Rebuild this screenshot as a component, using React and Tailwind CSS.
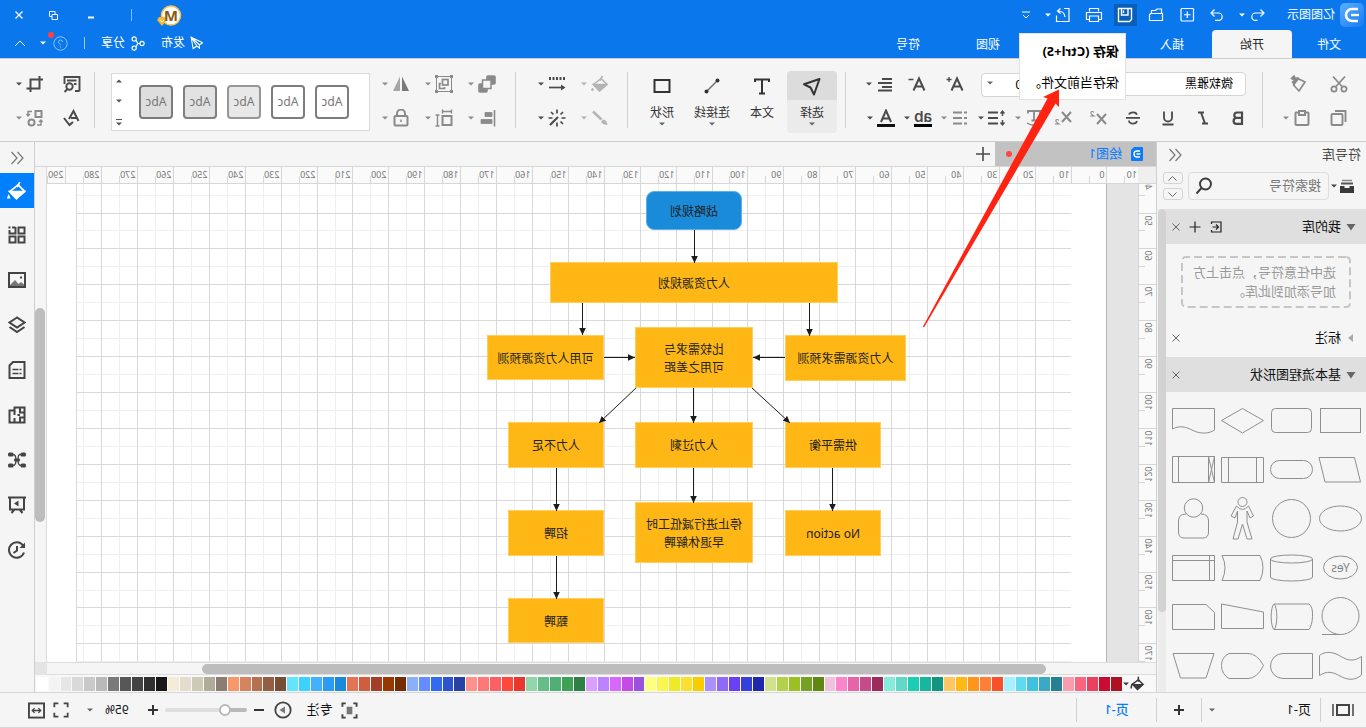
import React from "react";

const LINE = "#4a4a4a";

/* ---------- small helpers ---------- */

function Svg({ size = 18, box = 18, children, className = "", ...rest }) {
  return (
    <svg
      width={size}
      height={size}
      viewBox={`0 0 ${box} ${box}`}
      fill="none"
      stroke="currentColor"
      strokeWidth="1.6"
      className={`shrink-0 ${className}`}
      aria-hidden="true"
      {...rest}
    >
      {children}
    </svg>
  );
}

function Caret({ className = "" }) {
  return (
    <svg width="8" height="4" viewBox="0 0 8 4" className={`shrink-0 ${className}`} aria-hidden="true">
      <path d="M1 0.5H7L4 3.5Z" fill="currentColor" />
    </svg>
  );
}

function Tool({ label, caret, dim, children }) {
  return (
    <button
      type="button"
      aria-label={label}
      className={`flex shrink-0 items-center gap-[3px] ${dim ? "text-[#8a8a8a]" : "text-[#4a4a4a]"}`}
    >
      {children}
      {caret && <Caret />}
    </button>
  );
}

function Divider() {
  return <div className="mt-[13px] h-14 w-px shrink-0 bg-[#d0d0d0]" />;
}

function Rows({ top, bottom, className = "" }) {
  return (
    <div className={`flex shrink-0 flex-col gap-[10px] pt-[13px] ${className}`}>
      <div className="flex h-6 items-center">{top}</div>
      <div className="flex h-6 items-center">{bottom}</div>
    </div>
  );
}

/* ---------- title bar ---------- */

function TitleBar() {
  return (
    <header className="flex h-[30px] shrink-0 items-center justify-between pr-[15px] pl-[2px] text-white">
      <div className="flex items-center">
        <svg width="24" height="24" viewBox="0 0 24 24" aria-hidden="true">
          <defs>
            <linearGradient id="logo" x1="0" y1="1" x2="1" y2="0">
              <stop offset="0" stopColor="#1479f5" />
              <stop offset="1" stopColor="#5cb0ff" />
            </linearGradient>
          </defs>
          <rect width="24" height="24" rx="5" fill="url(#logo)" />
          <path d="M6 6H12a6 6 0 0 1 0 12H6" fill="none" stroke="#fff" strokeWidth="2.6" />
          <path d="M5 12H13" stroke="#fff" strokeWidth="2.4" />
        </svg>
        <h1 className="ml-[5px] text-xs">亿图图示</h1>
        <div className="ml-[20px] flex items-center">
          <button type="button" aria-label="撤销" className="flex items-center gap-[3px]">
            <Svg strokeWidth="1.2"><path d="M6.500 3.500L3 7L6.500 10.500M3.500 7H11.500a3.700 3.700 0 0 1 0 7.400H9.500" /></Svg>
            <Caret />
          </button>
          <button type="button" aria-label="恢复" className="ml-[12px]">
            <Svg strokeWidth="1.2"><path d="M11.500 3.500L15 7L11.500 10.500M14.500 7H7.500a3.700 3.700 0 0 0 0 7.400H11" /></Svg>
          </button>
          <button type="button" aria-label="新建" className="ml-[12px]">
            <Svg strokeWidth="1.2"><rect x="2.500" y="2.500" width="12.500" height="12.500" rx="1" /><path d="M8.750 5.500V12M5.500 8.750H12" /></Svg>
          </button>
          <button type="button" aria-label="打开" className="ml-[13px]">
            <Svg strokeWidth="1.2"><path d="M2.500 14.500V7.500H14.500L15.500 8.500V14.500H2.500ZM3.500 7V3H8L9.500 4.500H13.500V7" /></Svg>
          </button>
          <button type="button" aria-label="保存" className="ml-[10px] flex h-[22px] w-[23px] items-center justify-center bg-[#075fba]">
            <Svg strokeWidth="1.4"><path d="M2.500 2.500H15.500V15.500H4.500L2.500 13.500ZM6 2.500V9H12.500V2.500M10.500 4.500V7" /></Svg>
          </button>
          <button type="button" aria-label="打印" className="ml-[11px]">
            <Svg strokeWidth="1.2"><path d="M4.500 5.500V2.500H13.500V5.500M4 13.500H1.500V6.500H16.500V13.500H14M4.500 10H13.500V15.500H4.500Z" /></Svg>
          </button>
          <button type="button" aria-label="导出" className="ml-[13px] flex items-center gap-[2px]">
            <Svg strokeWidth="1.2"><path d="M8 2.500H3V15.500H15.500V9.500M7 11C7.500 7 10 5 14 5M11.500 2.500L14.500 5L11.500 7.500" /></Svg>
            <Caret />
          </button>
          <button type="button" aria-label="自定义" className="ml-[13px]">
            <svg width="10" height="8" viewBox="0 0 10 8" aria-hidden="true"><path d="M1 1H9" stroke="#fff" /><path d="M2 4L5 7L8 4" fill="none" stroke="#fff" /></svg>
          </button>
        </div>
      </div>
      <div className="flex items-center">
        <button type="button" aria-label="账户" className="relative mt-[2px] mr-[25px]">
          <svg width="25" height="22" viewBox="0 0 25 22" aria-hidden="true">
            <circle cx="11" cy="10.500" r="9.500" fill="#fff" stroke="#fbc34b" strokeWidth="1.500" />
            <path d="M16 12H23L25 15L20 21L15 15Z" fill="#fbb62f" />
            <path d="M18 15L20 17L22 15" fill="none" stroke="#fff" />
          </svg>
          <span className="absolute top-0 left-0 w-[22px] text-center text-[15px] leading-[21px] font-bold text-[#8a5a14]">M</span>
        </button>
        <span className="mr-[37px] h-3 w-px bg-white/50" />
        <button type="button" aria-label="最小化" className="mt-[4px] mr-[29px]">
          <svg width="7" height="3" viewBox="0 0 7 3" aria-hidden="true"><path d="M0 1.500H6" stroke="#fff" strokeWidth="2" /></svg>
        </button>
        <button type="button" aria-label="还原" className="mr-[26px]">
          <svg width="9" height="9" viewBox="0 0 9 9" fill="none" stroke="#fff" aria-hidden="true"><path d="M3 3V0.500H8.500V5.500H6M0.500 3.500H6V8.500H0.500Z" /></svg>
        </button>
        <button type="button" aria-label="关闭">
          <svg width="8" height="8" viewBox="0 0 8 8" stroke="#fff" strokeWidth="1.300" aria-hidden="true"><path d="M0.500 0.500L7.500 7.500M7.500 0.500L0.500 7.500" /></svg>
        </button>
      </div>
    </header>
  );
}

/* ---------- menu tabs ---------- */

const TABS = [
  ["文件", "w-[74px]"],
  ["开始", "w-20 rounded-t-sm bg-[#f5f5f5] text-[#222]"],
  ["插入", "w-20"],
  ["", "w-[104px]"],
  ["视图", "w-20"],
  ["符号", "w-20"],
];

function MenuBar() {
  return (
    <nav className="flex h-7 shrink-0 justify-between pr-[14px] text-xs text-white">
      <div className="relative flex">
        {TABS.map(([name, cls]) =>
          name ? (
            <button key={name} type="button" className={`${cls} h-7 pt-px`}>{name}</button>
          ) : (
            <span key="gap" className={cls} />
          )
        )}
        <div role="tooltip" className="absolute top-[3px] left-60 z-20 flex h-[67px] w-[107px] flex-col gap-[11px] border border-[#e2e2e2] bg-white pt-[7px] pl-[6px] text-[13px] text-black">
          <strong className="leading-5 whitespace-nowrap">保存 (Ctrl+S)</strong>
          <span className="leading-5 whitespace-nowrap">保存当前文件。</span>
        </div>
      </div>
      <div className="flex items-center pb-[2px]">
        <button type="button" className="mr-[16px] flex items-center gap-[4px]">
          <Svg size={15} strokeWidth="1.3"><path d="M1.500 8L15.500 1.500L13 15L8.500 12L15.500 1.500M5.500 10V14.500L8.500 12M1.500 8L5.500 10.500L15.500 1.500" /></Svg>
          发布
        </button>
        <button type="button" className="flex items-center gap-[5px]">
          <Svg size={15} strokeWidth="1.400"><circle cx="3.500" cy="9" r="2.500" /><circle cx="13" cy="3.500" r="2.500" /><circle cx="13" cy="14.500" r="2.500" /><path d="M6 9H8.500L11 5M8.500 9L11 13" /></Svg>
          分享
        </button>
        <span className="mr-[16px] ml-[16px] h-3 w-px bg-white/60" />
        <button type="button" aria-label="帮助" className="relative flex items-center gap-[6px]">
          <svg width="15" height="15" viewBox="0 0 15 15" fill="none" stroke="#8cc3fb" aria-hidden="true"><circle cx="7.500" cy="7.500" r="6.700" /><path d="M5.500 6a2 2 0 1 1 2.800 1.800Q7.500 8.200 7.500 9.300M7.500 10.500V11.700" /></svg>
          <span className="absolute -top-1 left-[14px] size-[6px] rounded-full bg-[#ff4040]" />
          <Caret />
        </button>
        <button type="button" aria-label="收起" className="ml-[13px]">
          <svg width="12" height="7" viewBox="0 0 12 7" fill="none" stroke="#fff" aria-hidden="true"><path d="M1 6L6 1L11 6" /></svg>
        </button>
      </div>
    </nav>
  );
}

/* ---------- ribbon ---------- */

const STYLES = [
  "border-[#7d7d7d] bg-white",
  "border-[#7d7d7d] bg-white",
  "border-[#969696] bg-[#e8e8e8]",
  "border-[#808080] bg-[#e2e2e2]",
  "border-[#7b7b7b] bg-[#dedede]",
];

function Bucket({ size = 18 }) {
  return (
    <Svg size={size}>
      <path d="M8 3.500L15.500 9.500L9.500 15.800L2 9.500Z" strokeWidth="1.600" />
      <path d="M3 9.500H15.500L9.500 15.800Z" fill="currentColor" />
      <path d="M9 5.500L6.500 1" />
      <path d="M16.500 13l1 2.200h-2z" fill="currentColor" strokeWidth="1" />
    </Svg>
  );
}

function BigTool({ label, caret, active, children }) {
  return (
    <button type="button" className={`flex h-[62px] w-[50px] flex-col items-center rounded-sm text-xs text-[#333] ${active ? "bg-[#ebebeb]" : ""}`}>
      <span className={`flex h-[29px] w-full shrink-0 items-center justify-center rounded-t-sm ${active ? "bg-[#dcdcdc]" : ""}`}>{children}</span>
      <span className="mt-[4px] leading-[18px] whitespace-nowrap">{label}</span>
      {caret && <Caret className="text-[#666]" />}
    </button>
  );
}

function Ribbon() {
  return (
    <div className="flex h-[83px] shrink-0 border-t border-[#cdcdcd] bg-[#f5f5f5]">
      <Rows
        className="w-[103px] pl-[18px]"
        top={
          <div className="flex gap-[23px]">
            <Tool label="剪切" dim><Svg strokeWidth="1.800"><circle cx="4" cy="14" r="2.600" /><circle cx="14" cy="14" r="2.600" /><path d="M3 1.500L12.500 12M15 1.500L5.500 12" /></Svg></Tool>
            <Tool label="格式刷" dim><Svg><path d="M2 7L9 3.500L13.500 10L8 16Z" strokeWidth="1.700" /><path d="M8.500 4L11 6.500L15.500 3.500L13 1L12 3L9 3ZM10 5L13 9L14.500 7Z" fill="currentColor" /></Svg></Tool>
          </div>
        }
        bottom={
          <div className="flex gap-[19px]">
            <Tool label="复制" dim><Svg strokeWidth="1.900"><rect x="5.500" y="5" width="11" height="11" rx="1" /><path d="M2.500 13V2H13" /></Svg></Tool>
            <Tool label="粘贴" caret dim><Svg strokeWidth="2"><path d="M5 3.500H3Q2.500 3.500 2.500 4.500V15Q2.500 16 3.500 16H14.500Q15.500 16 15.500 15V4.500Q15.500 3.500 15 3.500H13" /><path d="M6 2H12V6H6Z" /></Svg></Tool>
          </div>
        }
      />
      <Divider />
      <Rows
        className="w-[416px]"
        top={
          <div className="flex items-center pl-[16px]">
            <select aria-label="字体" defaultValue="微软雅黑" className="h-6 w-[205px] appearance-none rounded-sm border border-[#d4d4d4] bg-white pl-[12px] text-xs text-black">
              <option>微软雅黑</option>
            </select>
            <div className="relative">
              <select aria-label="字号" defaultValue="10" className="h-6 w-[60px] appearance-none rounded-sm border border-[#d4d4d4] bg-white pl-[11px] text-xs text-black">
                <option>10</option>
              </select>
              <Caret className="absolute top-[10px] right-[5px] text-[#666]" />
            </div>
            <div className="ml-[17px] flex">
              <Tool label="增大字号"><Svg><path d="M1.500 15.500L7 3.500L12.500 15.500M3.500 11.500H10.500" strokeWidth="2" /><path d="M12.500 4.500H17.500M15 2V7" strokeWidth="1.300" /></Svg></Tool>
            </div>
            <div className="ml-[20px] flex">
              <Tool label="减小字号"><Svg><path d="M1.500 15.500L7 3.500L12.500 15.500M3.500 11.500H10.500" strokeWidth="2" /><path d="M12.500 4.500H17.500" strokeWidth="1.500" /></Svg></Tool>
            </div>
            <div className="ml-[14px] flex">
              <Tool label="对齐" caret><Svg strokeWidth="2"><path d="M2 4H12M2 8H16M2 12H12M2 15.500H16" /></Svg></Tool>
            </div>
          </div>
        }
        bottom={
          <div className="flex items-center pl-[6px] text-[#4a4a4a]">
            <button type="button" aria-label="加粗" className="flex w-[35px] justify-center"><Svg strokeWidth="2.200"><path d="M5 3.500H10a2.700 2.700 0 0 1 0 5.400H5ZM5 9H10.500a2.900 2.900 0 0 1 0 5.800H5Z" /></Svg></button>
            <button type="button" aria-label="斜体" className="flex w-[35px] justify-center"><Svg strokeWidth="2"><path d="M8 3.500H14M4 14.500H10M11 3.500L7 14.500" /></Svg></button>
            <button type="button" aria-label="下划线" className="flex w-[35px] justify-center"><Svg strokeWidth="1.800"><path d="M5 2.500V8.500a4 4 0 0 0 8 0V2.500M3.500 15.500H14.500" /></Svg></button>
            <button type="button" aria-label="删除线" className="flex w-[35px] justify-center"><Svg strokeWidth="1.700"><path d="M13 5.500C12 2.500 5.500 2.500 5.200 5.800M5 12C6 15.500 13 15.500 13 11.500M2 8.800H16" /></Svg></button>
            <button type="button" aria-label="上标" className="flex w-[35px] justify-center text-[#8a8a8a]"><Svg strokeWidth="2"><path d="M1 5L10 15M10 5L1 15" /><path d="M13 3.500Q14.500 1.800 16 3Q17 4.500 13 7H17" strokeWidth="1.100" /></Svg></button>
            <button type="button" aria-label="下标" className="flex w-[35px] justify-center text-[#8a8a8a]"><Svg strokeWidth="2"><path d="M1 3L10 13M10 3L1 13" /><path d="M13 11.500Q14.500 9.800 16 11Q17 12.500 13 15H17" strokeWidth="1.100" /></Svg></button>
            <div className="flex gap-2 pl-[3px]">
              <Tool label="文字效果" caret dim><Svg strokeWidth="1.800"><path d="M3 4.500V2H15V4.500M9 2V11M6.500 11.500H11.500" /><path d="M2 14Q9 18.500 16 14" strokeWidth="1.400" /></Svg></Tool>
              <Tool label="行距" caret><Svg strokeWidth="2.200"><path d="M8 3.500H18M8 9H18M8 14.500H18" /><path d="M3.500 2V7M1.500 4.500L3.500 2L5.500 4.500M3.500 11V16M1.500 13.500L3.500 16L5.500 13.500" strokeWidth="1.400" /></Svg></Tool>
              <Tool label="项目符号" caret dim><Svg strokeWidth="1.900"><path d="M2 3.500H5M7 3.500H16M2 9H5M7 9H16M2 14.500H5M7 14.500H16" /></Svg></Tool>
              <button type="button" aria-label="突出显示" className="flex items-center gap-[3px]">
                <span className="flex w-[18px] flex-col items-center border-b-[3px] border-black font-['Inter',sans-serif] text-[15px] leading-[15px] font-semibold">ab</span>
                <Caret />
              </button>
              <button type="button" aria-label="字体颜色" className="flex items-center gap-[3px]">
                <Svg><path d="M4 13L9 1.500L14 13M5.500 9.500H12.500" strokeWidth="2" /><path d="M0 16.500H18" stroke="#111" strokeWidth="3" /></Svg>
                <Caret />
              </button>
            </div>
          </div>
        }
      />
      <Divider />
      <div className="flex shrink-0 pt-[12px] pr-[9px] pl-[8px]">
        <BigTool label="选择" caret active><Svg size={20} box={20}><path d="M2.500 3L18 8.300L11.500 11.500L8 18.500Z" strokeWidth="2" strokeLinejoin="round" /></Svg></BigTool>
        <BigTool label="文本"><Svg strokeWidth="2"><path d="M2 5V2.500H16V5M9 2.500V16M6 16.500H12" /></Svg></BigTool>
        <BigTool label="连接线" caret><Svg><path d="M3.500 3.500L14.500 14.500" stroke="#777" /><circle cx="3.500" cy="3.500" r="2" fill="currentColor" stroke="none" /><circle cx="14.500" cy="14.500" r="2" fill="currentColor" stroke="none" /></Svg></BigTool>
        <BigTool label="形状" caret><Svg strokeWidth="2"><rect x="1.500" y="3" width="15" height="12" /></Svg></BigTool>
      </div>
      <Divider />
      <Rows
        className="w-[111px] pl-[18px]"
        top={
          <div className="flex gap-[14px]">
            <span className="flex opacity-60"><Tool label="填充" caret dim><Bucket /></Tool></span>
            <Tool label="线条样式" caret><Svg><path d="M1 3.500H17" strokeWidth="3" strokeDasharray="2 1.500" /><path d="M17 12.500H4" strokeWidth="1.700" /><path d="M0.500 12.500L5 9.500V15.500Z" fill="currentColor" stroke="none" /></Svg></Tool>
          </div>
        }
        bottom={
          <div className="flex gap-[14px]">
            <span className="flex opacity-60"><Tool label="线条" caret dim><Svg><path d="M16 2.500L7.500 10.500" strokeWidth="2.500" /><path d="M1.500 16Q2 11 6 10.500L8 13Q6.500 15.500 1.500 16Z" fill="currentColor" stroke="none" /></Svg></Tool></span>
            <Tool label="效果" caret><Svg strokeWidth="1.700"><path d="M9 0.500V4.500M9 13.500V17.500M0.500 9H4.500M13.500 9H17.500M3 3L5.500 5.500M15 3L12.500 5.500M3 15L5.500 12.500" /><path d="M8 8L16 16" strokeWidth="2.200" /></Svg></Tool>
          </div>
        }
      />
      <Divider />
      <Rows
        className="w-[145px] pl-[19px]"
        top={
          <div className="flex gap-[14px]">
            <Tool label="层次" caret dim><Svg><rect x="1" y="1" width="8" height="8" fill="currentColor" rx="1" /><rect x="9" y="9" width="8" height="8" fill="currentColor" rx="1" /><rect x="5" y="5" width="8.500" height="8.500" fill="#f5f5f5" strokeWidth="1.500" /></Svg></Tool>
            <Tool label="组合" caret dim><Svg><rect x="1.500" y="1.500" width="15" height="15" strokeWidth="1" /><path d="M0 0H3V3H0ZM15 0H18V3H15ZM0 15H3V18H0ZM15 15H18V18H15Z" fill="currentColor" stroke="none" /><rect x="5" y="4.500" width="5.500" height="5.500" strokeWidth="1.700" /><path d="M12 8.500H13.500V13.500H8.500V12" strokeWidth="1.700" /></Svg></Tool>
            <Tool label="翻转" caret dim><Svg><path d="M1 16H8V1.500Z" fill="#7a7a7a" stroke="none" /><path d="M10 16H17L10 1.500Z" fill="#a6a6a6" stroke="none" /></Svg></Tool>
          </div>
        }
        bottom={
          <div className="flex gap-[14px]">
            <Tool label="对齐形状" caret dim><Svg><path d="M1.500 1V17.500" /><path d="M4 3.500H11V7.500H4ZM4 10.500H15V14.500H4Z" fill="currentColor" strokeWidth="0.800" /></Svg></Tool>
            <Tool label="尺寸" caret dim><Svg strokeWidth="2"><path d="M1 2.500H11M1.500 0.500V4.500M10.500 0.500V4.500M15.500 6V17M13.500 6H17.500M13.500 17H17.500" strokeWidth="1.400" /><rect x="1.500" y="7" width="9" height="9" /></Svg></Tool>
            <Tool label="锁定" caret dim><Svg strokeWidth="2"><rect x="2.500" y="7" width="13" height="9.500" rx="1" /><path d="M5 7V4.500a4 4 0 0 1 8 0V7" /><path d="M9 10.500V13" strokeWidth="1.500" /></Svg></Tool>
          </div>
        }
      />
      <div className="mt-[14px] flex h-[58px] min-w-0 flex-1 items-center justify-between border border-[#dadada] bg-white pr-[3px] pl-[20px]">
        <div className="flex gap-[10px]">
          {STYLES.map((s, i) => (
            <button key={i} type="button" className={`size-[34px] rounded border-2 text-xs text-[#777] ${s}`}>Abc</button>
          ))}
        </div>
        <div className="flex flex-col items-center gap-[16px] text-[#555]">
          <button type="button" aria-label="上一行"><Caret className="rotate-180" /></button>
          <button type="button" aria-label="下一行"><Caret /></button>
          <button type="button" aria-label="更多样式" className="flex flex-col items-center"><span className="mb-[2px] h-px w-[6px] bg-[#555]" /><Caret /></button>
        </div>
      </div>
      <div className="w-4 shrink-0" />
      <Divider />
      <Rows
        className="w-[94px] pl-[13px]"
        top={
          <div className="flex gap-[19px]">
            <Tool label="查找"><Svg strokeWidth="1.900"><path d="M1.500 16V2H16.500V9M1.500 16H6M4.500 5.500H14M4.500 9H7" /><circle cx="11.500" cy="11.500" r="3.200" /><path d="M13.500 14L16.500 17" /></Svg></Tool>
            <Tool label="裁剪" caret><Svg strokeWidth="2"><path d="M4.500 1V13.500H17.500M1 4.500H13.500V17" /></Svg></Tool>
          </div>
        }
        bottom={
          <div className="flex gap-[19px]">
            <Tool label="拼写检查"><Svg strokeWidth="2"><path d="M2.500 12L7.500 2L12 10M4 9H10M8 13L11.500 16L17 9" /></Svg></Tool>
            <Tool label="替换" caret dim><Svg><rect x="2.500" y="2" width="6" height="6" strokeWidth="2" /><circle cx="12.500" cy="13.500" r="3" strokeWidth="2" /><path d="M12 2.500H16V7M14 5L16 7L17.500 5M7 16H3V11M1.500 13L3 11L5 13" strokeWidth="1.400" /></Svg></Tool>
          </div>
        }
      />
    </div>
  );
}

/* ---------- symbol library ---------- */

const SHAPES = [
  <rect x="4.500" y="12.500" width="40" height="24" />,
  <rect x="4.500" y="12.500" width="40" height="24" rx="4" />,
  <path d="M3.500 24.500L24.500 12.500L45.500 24.500L24.500 37Z" />,
  <path d="M3.500 12.500H45.500V33C38 29 32 31 25 34.500S9 38 3.500 34Z" />,
  <path d="M10.500 12.500H46L40 37H4.500Z" />,
  <rect x="3.500" y="15.500" width="42" height="18" rx="9" />,
  <path d="M3.500 12.500H45.500V37.500H3.500ZM10.500 12.500V37.500M38.500 12.500V37.500" />,
  <path d="M3.500 11.500H45.500V37.500H3.500ZM9.500 11.500V37.500M39.500 11.500V37.500M3.500 11.500L9.500 37.500M9.500 11.500L3.500 37.500" />,
  <ellipse cx="24.500" cy="24.500" rx="21" ry="12.500" />,
  <circle cx="24.500" cy="24.500" r="19" />,
  <g><circle cx="24.500" cy="8" r="4.500" /><path d="M18.500 12Q24.500 19 30.500 12L36 22L32 24L29.500 17V28L34 45H29L24.500 30L20 45H15L20 28V17L17 24L13.500 22Z" /></g>,
  <g><circle cx="24.500" cy="14" r="9.200" /><path d="M17 20Q9.500 20 9.500 27V38Q9.500 44 15 44H34Q39.500 44 39.500 38V27Q39.500 20 32 20" /></g>,
  <g><ellipse cx="24.500" cy="24.500" rx="17" ry="11.500" /><text x="24.500" y="28.500" textAnchor="middle" fontSize="12" fill="#858585" stroke="none">Yes</text></g>,
  <path d="M3.500 16A21 4 0 0 1 45.500 16A21 4 0 0 1 3.500 16V34A21 4 0 0 0 45.500 34V16" />,
  <path d="M45 12.500Q39 24.500 45 37.500H7Q1 24.500 7 12.500Z" />,
  <path d="M3.500 12.500H45.500V37.500H3.500ZM3.500 17.500H45.500M8.500 12.500V37.500" />,
  <g><circle cx="24.500" cy="24" r="18.500" /><path d="M24.500 42.500H43" /></g>,
  <path d="M42 12A3.500 13 0 0 1 42 37.500A3.500 13 0 0 1 42 12H7Q3 15 3.500 24.500T7 37.500H42" />,
  <path d="M3.500 20L45.500 12V36.500H3.500Z" />,
  <path d="M12 12.500H45.500V37.500H3.500V20.500Z" />,
  <path d="M3.500 15.500C10 20 16 20.500 24 15.500S40 10 45.500 14.500V34.500C38 29.500 32 31 25 35S10 40 3.500 34Z" />,
  <path d="M3.500 12.500H33A12.500 12.500 0 0 1 33 37.500H3.500Z" />,
  <path d="M3.500 24.500Q10 12.500 19 12.500H38Q45.500 16 45.500 24.500T38 37.500H19Q10 37.500 3.500 24.500Z" />,
  <path d="M4 12.500H45L37.500 37H12Z" />,
];

function SectionHead({ title, open, extra }) {
  return (
    <div className={`flex h-[35px] items-center pr-[6px] pl-[10px] text-[13px] ${open ? "bg-[#dfdfdf]" : ""}`}>
      <button type="button" className="flex flex-1 items-center gap-[5px] text-[#111]">
        <svg width="10" height="8" viewBox="0 0 10 8" aria-hidden="true">
          {open ? <path d="M0.500 1H9.500L5 7.500Z" fill="#666" /> : <path d="M3 0V8L8 4Z" fill="#aaa" />}
        </svg>
        {title}
      </button>
      {extra}
      <button type="button" aria-label={`关闭${title}`}>
        <svg width="8" height="8" viewBox="0 0 8 8" stroke="#666" aria-hidden="true"><path d="M0.500 0.500L7.500 7.500M7.500 0.500L0.500 7.500" /></svg>
      </button>
    </div>
  );
}

function DoubleChevron() {
  return (
    <svg width="14" height="14" viewBox="0 0 14 14" fill="none" stroke="#777" strokeWidth="1.200" aria-hidden="true">
      <path d="M6.500 1L1 7L6.500 13M12.500 1L7 7L12.500 13" />
    </svg>
  );
}

function Library() {
  return (
    <aside className="flex w-[210px] shrink-0 flex-col overflow-hidden border-r border-[#cfcfcf] bg-[#f5f5f5]">
      <div className="flex h-[26px] shrink-0 items-center justify-between pr-[11px] pl-[5px] text-[13px] text-[#444]">
        <h2>符号库</h2>
        <button type="button" aria-label="折叠"><DoubleChevron /></button>
      </div>
      <div className="mt-[4px] mb-[9px] flex shrink-0 items-center">
        <button type="button" aria-label="符号库列表" className="flex w-[37px] items-center gap-px pl-[11px] text-[#444]">
          <svg width="16" height="16" viewBox="0 0 16 16" aria-hidden="true"><path d="M3 2.500H13" stroke="#888" strokeWidth="1.500" /><path d="M2 5.500H14" stroke="#555" strokeWidth="2" /><path d="M1 8H5.500V10H10.500V8H15V15H1Z" fill="#3a3a3a" /></svg>
          <Caret />
        </button>
        <label className="flex h-7 w-[141px] items-center rounded-sm border border-[#dcdcdc] pr-[6px] pl-[7px]">
          <input aria-label="搜索符号" placeholder="搜索符号" className="min-w-0 flex-1 bg-transparent text-[13px] outline-none placeholder:text-[#777]" />
          <Svg className="text-[#3a3a3a]" strokeWidth="1.900"><circle cx="7.500" cy="7" r="5.500" /><path d="M11.500 11L16.500 16.500" /></Svg>
        </label>
        <div className="ml-[5px] flex flex-col gap-1">
          <button type="button" aria-label="上移" className="flex h-3 w-5 items-center justify-center rounded-[3px] border border-[#d4d4d4]"><svg width="9" height="5" viewBox="0 0 9 5" fill="none" stroke="#666" aria-hidden="true"><path d="M0.500 4.500L4.500 0.500L8.500 4.500" /></svg></button>
          <button type="button" aria-label="下移" className="flex h-3 w-5 items-center justify-center rounded-[3px] border border-[#d4d4d4]"><svg width="9" height="5" viewBox="0 0 9 5" fill="none" stroke="#666" aria-hidden="true"><path d="M0.500 0.500L4.500 4.500L8.500 0.500" /></svg></button>
        </div>
      </div>
      <div className="flex min-h-0 flex-1">
        <div className="w-[200px] overflow-hidden">
          <SectionHead
            title="我的库"
            open
            extra={
              <span className="mr-[9px] flex items-center gap-[9px] text-[#222]">
                <button type="button" aria-label="导入"><svg width="12" height="12" viewBox="0 0 12 12" fill="none" stroke="currentColor" strokeWidth="1.200" aria-hidden="true"><path d="M10.500 3V1H1V11H10.500V9M3.500 6H9.500M6 3.500L3.500 6L6 8.500" /></svg></button>
                <button type="button" aria-label="添加"><svg width="12" height="12" viewBox="0 0 12 12" stroke="currentColor" strokeWidth="1.200" aria-hidden="true"><path d="M6 0.500V11.500M0.500 6H11.500" /></svg></button>
              </span>
            }
          />
          <div className="p-[12px_15px]">
            <div className="relative h-[52px] pt-[7px] pl-[15px] text-[13px] leading-[19px] whitespace-nowrap text-[#999]">
              <svg className="absolute inset-0 h-full w-full overflow-visible" aria-hidden="true"><rect x="1" y="1" width="168" height="50" rx="4" fill="none" stroke="#c6c6c6" strokeWidth="2" strokeDasharray="8 4" /></svg>
              选中任意符号，点击上方<br />加号添加到此库。
            </div>
          </div>
          <SectionHead title="标注" />
          <div className="pt-[2px]"><SectionHead title="基本流程图形状" open /></div>
          <div className="grid grid-cols-[repeat(4,49px)] pt-[4px] pl-px">
            {SHAPES.map((shape, i) => (
              <button key={i} type="button" aria-label={`形状 ${i + 1}`}>
                <svg width="49" height="49" viewBox="0 0 49 49" fill="none" stroke="#8f8f8f" strokeWidth="1">{shape}</svg>
              </button>
            ))}
          </div>
        </div>
        <div className="w-2 bg-[#ececec]"><div className="h-[403px] rounded-full bg-[#d2d2d2]" /></div>
      </div>
    </aside>
  );
}

/* ---------- canvas ---------- */

const STEP = 35.906;
const tickX = (n) => 31.5 + Math.floor(n * STEP);
const tickY = (n) => 29.5 + Math.floor((n - 5) * STEP);
const range = (a, b) => Array.from({ length: b - a + 1 }, (_, i) => a + i);

function TopRuler() {
  return (
    <svg className="h-4 w-full" aria-hidden="true">
      {range(-1, 29).map((n) => (
        <g key={n}>
          <path d={`M${tickX(n)} 0V16M${tickX(n + 0.5)} 9V16`} stroke="#d6d6d6" />
          <text x={Math.max(tickX(n) + 2, 1)} y="11" fontSize="9" fill="#777">{Math.abs(n * 10)}</text>
        </g>
      ))}
    </svg>
  );
}

function SideRuler() {
  return (
    <svg className="h-full w-[17px]" aria-hidden="true">
      {range(4, 17).map((n) => (
        <g key={n}>
          <path d={`M0 ${tickY(n)}H17M11 ${tickY(n + 0.5)}H17`} stroke="#d6d6d6" />
          <text transform={`translate(11 ${tickY(n) + 2}) rotate(-90)`} textAnchor="end" fontSize="9" fill="#777">{n * 10}</text>
        </g>
      ))}
    </svg>
  );
}

const NODES = [
  { t: ["战略规划"], c: "left-[396px] top-[7px] w-[96px] h-[39px] rounded-lg bg-[#1a8bd9] border-[#5cb0ec]" },
  { t: ["人力资源规划"], c: "left-[300px] top-[78px] w-[288px] h-[41px]" },
  { t: ["人力资源需求预测"], c: "left-[232px] top-[151px] w-[121px] h-[46px]" },
  { t: ["比较需求与", "可用之差距"], c: "left-[385px] top-[143px] w-[118px] h-[61px]" },
  { t: ["可用人力资源预测"], c: "left-[534px] top-[151px] w-[117px] h-[45px]" },
  { t: ["供需平衡"], c: "left-[257px] top-[238px] w-[96px] h-[46px]" },
  { t: ["人力过剩"], c: "left-[385px] top-[238px] w-[118px] h-[46px]" },
  { t: ["人力不足"], c: "left-[534px] top-[238px] w-[96px] h-[46px]" },
  { t: ["No action"], c: "left-[257px] top-[326px] w-[96px] h-[46px]" },
  { t: ["停止进行减低工时", "早退休解聘"], c: "left-[385px] top-[318px] w-[118px] h-[61px]" },
  { t: ["招聘"], c: "left-[534px] top-[326px] w-[96px] h-[46px]" },
  { t: ["甄聘"], c: "left-[534px] top-[414px] w-[96px] h-[45px]" },
];

const LINKS = [
  [443.5, 46, 443.5, 79],
  [328.5, 119, 328.5, 152],
  [555.5, 119, 555.5, 151],
  [353, 173.5, 385, 173.5],
  [534, 173.5, 503, 173.5],
  [444.5, 204, 444.5, 239],
  [386, 204, 348, 239],
  [502, 204, 539, 239],
  [305.5, 284, 305.5, 327],
  [444.5, 284, 444.5, 319],
  [581.5, 284, 581.5, 327],
  [581.5, 372, 581.5, 415],
];

function Canvas() {
  return (
    <div className="relative min-w-0 flex-1 overflow-hidden bg-white">
      <div className="absolute inset-y-0 left-0 w-8 border-r border-[#b5b5b5] bg-[#e4e4e4]" />
      <svg className="absolute inset-y-0 left-[67px] h-full w-[995px]" aria-hidden="true">
        {range(1, 28).map((n) => <path key={n} d={`M${tickX(n + 0.5) - 67} 0V2000`} stroke="#efefef" />)}
        {range(4, 25).map((n) => <path key={n} d={`M0 ${tickY(n + 0.5)}H995`} stroke="#efefef" />)}
        {range(1, 28).map((n) => <path key={n} d={`M${tickX(n) - 67} 0V2000`} stroke="#d9d9d9" />)}
        {range(5, 25).map((n) => <path key={n} d={`M0 ${tickY(n)}H995`} stroke="#d9d9d9" />)}
        <path d="M994.500 0V2000" stroke="#d9d9d9" />
      </svg>
      {NODES.map(({ t, c }) => (
        <div key={t[0]} className={`absolute flex flex-col items-center justify-center border pt-[2px] text-xs leading-[18px] whitespace-nowrap text-[#222] ${c.includes("bg-") ? "" : "border-[#ffcf5c] bg-[#ffb715]"} ${c}`}>
          {t.map((s) => <span key={s}>{s}</span>)}
        </div>
      ))}
      <svg className="absolute inset-0 h-full w-full" aria-hidden="true">
        <defs>
          <marker id="head" viewBox="0 0 7 7" refX="7" refY="3.500" markerWidth="7" markerHeight="7" markerUnits="userSpaceOnUse" orient="auto">
            <path d="M0 0.200L7 3.500L0 6.800Z" fill="#1c1c1c" />
          </marker>
        </defs>
        {LINKS.map(([x1, y1, x2, y2]) => (
          <line key={`${x1}-${y1}-${x2}`} x1={x1} y1={y1} x2={x2} y2={y2} stroke="#1c1c1c" strokeWidth="1" markerEnd="url(#head)" />
        ))}
      </svg>
    </div>
  );
}

const SWATCHES =
  "ae111f cb0b32 e8425f f9647e f89cb0 278091 3aa9c4 3ec2e0 5fdaf0 a6f1ff f5522b ff7f37 ff951b ffb814 ffc663 129480 17b69f 1bceb3 63d8c6 84ecdb 9c2a5b c74b8b e665a9 f986ca f2c1de 5f8812 76a127 9ac024 b3d24a d2e18d 1f27ad 3640d9 6b3ff3 8f69f8 ab90fa f9cc00 fddf2f efe927 faf64e fdff82 9a52de c34be6 d669fc bd82fe dba0ff 2f8044 3da156 50ae77 65bd87 91d7ab e8372c fe493a fb6164 fe787a ff908a 2742a3 2d54cf 326af0 628cff 8ab0f8 742d02 963800 a43f27 d15d3f e27556 188adb 2d9bf5 43b1ff 3bd2ff 66e4ff 764e36 955d43 b3714f d5845e f7986b 8b7d74 b1ab9a cdcab8 e4dccc f4ecd9 181818 303030 434343 575757 7a7a7a b9b9b9 c9c9c9 d9d9d9 e6e6e6 f3f3f3 ffffff".split(" ");

function Workspace() {
  return (
    <main className="flex min-w-0 flex-1 flex-col">
      <div className="flex h-[25px] shrink-0 border-b border-[#d6d6d6] bg-[#f5f5f5]">
        <div className="flex w-[161px] items-center bg-[#c2c2c2] pr-[11px] pl-[13px] text-[13px] text-[#0a7bff]">
          <svg width="12" height="14" viewBox="0 0 12 14" aria-hidden="true"><path d="M0 1Q0 0 1 0H9L12 3V13Q12 14 11 14H1Q0 14 0 13Z" fill="#0a7bff" /><path d="M3 4H6A3 3 0 0 1 6 10H3M2.500 7H6.500" fill="none" stroke="#fff" strokeWidth="1.400" /></svg>
          <span className="ml-[9px] flex-1">绘图1</span>
          <span className="size-[6px] rounded-full bg-[#ff4545]" />
        </div>
        <button type="button" aria-label="新建绘图" className="ml-[5px]">
          <svg width="14" height="14" viewBox="0 0 14 14" stroke={LINE} strokeWidth="1.600" aria-hidden="true"><path d="M7 0V14M0 7H14" /></svg>
        </button>
      </div>
      <div className="flex min-h-0 flex-1">
        <div className="flex min-w-0 flex-1 flex-col">
          <div className="flex h-[17px] shrink-0 border-b border-[#d6d6d6] bg-[#fafafa]">
            <div className="w-[18px] shrink-0 bg-[#efefef]" />
            <div className="min-w-0 flex-1 overflow-hidden"><TopRuler /></div>
          </div>
          <div className="flex min-h-0 flex-1">
            <div className="w-[18px] shrink-0 overflow-hidden border-r border-[#d6d6d6] bg-[#fafafa]"><SideRuler /></div>
            <Canvas />
          </div>
        </div>
        <div className="w-3 shrink-0 border-l border-[#dcdcdc] bg-[#f5f5f5] pt-[141px] pl-px">
          <div className="h-[214px] w-[10px] rounded-full bg-[#bdbdbd]" />
        </div>
      </div>
      <div className="flex h-[13px] shrink-0">
        <div className="flex flex-1 items-center border-y border-[#dcdcdc] bg-[#f5f5f5] pr-[155px] pl-[110px]">
          <div className="h-[10px] w-full rounded-full bg-[#bdbdbd]" />
        </div>
        <div className="w-3 bg-[#e4e4e4]" />
      </div>
      <div className="flex h-[17px] shrink-0 items-center bg-[#f8f8f8]">
        <button type="button" aria-label="填充颜色" className="flex w-[34px] items-center pl-[11px] text-[#3a3a3a]">
          <svg width="15" height="15" viewBox="0 0 18 18" fill="none" stroke="currentColor" strokeWidth="1.800" aria-hidden="true"><path d="M8 4.500L14.500 9.500L9 16L2.500 10Z" /><path d="M3 10.500H14.500L9 16Z" fill="currentColor" /><path d="M8 7V1M14.500 9Q17 11 16.500 15" /></svg>
          <Caret />
        </button>
        {SWATCHES.map((c) => (
          <button key={c} type="button" aria-label={`#${c}`} className="mr-px h-[14px] min-w-0 flex-1" style={{ backgroundColor: `#${c}` }} />
        ))}
      </div>
    </main>
  );
}

/* ---------- side tool strip ---------- */

const STRIP = [
  ["符号", <g><rect x="1.500" y="1.500" width="6" height="6" /><path d="M10.500 1.500H14M10.500 1V7.500H16.500V4M15.500 1.500H17.500" /><rect x="1.500" y="10.500" width="6" height="6" /><rect x="10.500" y="10.500" width="6" height="6" /></g>],
  ["图片", <g><rect x="1" y="2" width="16" height="14" /><path d="M2 15V13.500L5 11L7.500 13L11 9L16 14V15Z" fill="#777" stroke="none" /><path d="M4 5.500H6V7.500H4Z" fill="currentColor" stroke="none" /></g>],
  ["图层", <g><path d="M9 1.500L16.500 6.500L9 11.500L1.500 6.500Z" /><path d="M1.500 11L9 16L16.500 11" /></g>],
  ["注释", <g><path d="M1.500 1H13L16.500 4.500V17H1.500Z" /><path d="M4.500 8.500H6.500M7.500 8.500H13.500M4.500 12.500H6.500M7.500 12.500H13.500" strokeWidth="1.500" /></g>],
  ["平面图", <g><path d="M1.500 1.500H11.500V4.500H16.500V16.500H1.500Z" /><path d="M6 1.500V6.500H1.500M11.500 4.500V9M11.500 16.500V12M6 16.500V11.500H1.500M8.500 9H6" /></g>],
  ["思维导图", <g><path d="M5 3.500H6Q8 3.500 8 9Q8 14.500 5 14.500M13 3.500Q10 3.500 10 9Q10 14.500 13 14.500M6 9H12" strokeWidth="1.300" /><rect x="0" y="1.500" width="5.500" height="4" rx="1.500" fill="currentColor" stroke="none" /><rect x="12.500" y="1.500" width="5.500" height="4" rx="1.500" fill="currentColor" stroke="none" /><rect x="0" y="12.500" width="5.500" height="4" rx="1.500" fill="currentColor" stroke="none" /><rect x="12.500" y="12.500" width="5.500" height="4" rx="1.500" fill="currentColor" stroke="none" /><rect x="6.500" y="7.500" width="5" height="3" fill="currentColor" stroke="none" /></g>],
  ["演示", <g><path d="M0 1.500H18M2 1.500V13.500H16V1.500M6 14L3.500 17M12 14L14.500 17" /><path d="M7.500 4.500V10.500L12 7.500Z" fill="currentColor" stroke="none" /></g>],
  ["历史", <g><path d="M3 4.500A7.700 7.700 0 1 1 2 11.500" /><path d="M1 1.500V7H6.500Z" fill="currentColor" stroke="none" /><path d="M9 5V9.500L12.500 12" /></g>],
];

function SideStrip() {
  return (
    <aside className="flex w-[35px] shrink-0 flex-col border-l border-[#cfcfcf] bg-[#f5f5f5] text-[#444]">
      <button type="button" aria-label="折叠工具栏" className="flex h-[31px] items-center justify-center"><DoubleChevron /></button>
      <div className="flex flex-col gap-[10px]">
        <button type="button" aria-label="样式" className="flex h-[35px] items-center justify-center bg-[#0080ff] text-white"><Bucket size={20} /></button>
        {STRIP.map(([name, art]) => (
          <button key={name} type="button" aria-label={name} className="flex h-[35px] items-center justify-center pb-[2px]">
            <Svg strokeWidth="2">{art}</Svg>
          </button>
        ))}
      </div>
    </aside>
  );
}

/* ---------- status bar ---------- */

function StatusBar() {
  return (
    <footer className="flex h-9 shrink-0 items-center justify-between border-y border-[#d6d6d6] bg-[#f5f5f5] pr-[28px] text-[13px] text-[#111]">
      <div className="flex items-center text-[#444]">
        <button type="button" aria-label="页面视图" className="w-[45px] pl-[12px]">
          <svg width="22" height="12" viewBox="0 0 22 12" fill="none" stroke="#444" aria-hidden="true"><rect x="5" y="1" width="12" height="10" strokeWidth="2" /><path d="M1 0V12M21 0V12" strokeWidth="1.500" /></svg>
        </button>
        <span className="h-6 w-px bg-[#d0d0d0]" />
        <button type="button" className="flex w-[118px] items-center justify-between pr-[6px] pl-[9px] text-[#111]">页-1<Caret className="text-[#666]" /></button>
        <span className="h-6 w-px bg-[#d0d0d0]" />
        <button type="button" aria-label="添加页面" className="flex w-11 justify-center">
          <svg width="10" height="10" viewBox="0 0 10 10" stroke="#333" strokeWidth="2" aria-hidden="true"><path d="M5 0V10M0 5H10" /></svg>
        </button>
        <span className="h-6 w-px bg-[#d0d0d0]" />
        <button type="button" className="w-[79px] font-medium text-[#0a7bff]">页-1</button>
        <span className="h-6 w-px bg-[#d0d0d0]" />
      </div>
      <div className="flex items-center text-[#444]">
        <button type="button" className="flex items-center gap-[8px] text-[#111]">
          <Svg size={17} strokeWidth="2" className="text-[#444]"><path d="M1.500 5V1.500H5M13 1.500H16.500V5M16.500 13V16.500H13M5 16.500H1.500V13" /><rect x="6" y="5" width="6" height="8" fill="#777" stroke="none" /></Svg>
          专注
        </button>
        <button type="button" aria-label="放映" className="ml-[15px]">
          <Svg strokeWidth="1.800"><circle cx="9" cy="9" r="7.700" /><path d="M7 5.500V12.500L12.500 9Z" fill="#777" stroke="none" /></Svg>
        </button>
        <button type="button" aria-label="缩小" className="ml-[10px]">
          <svg width="10" height="10" viewBox="0 0 10 10" stroke="#333" strokeWidth="2" aria-hidden="true"><path d="M0 5H10" /></svg>
        </button>
        <input
          type="range"
          aria-label="缩放"
          min="0"
          max="100"
          defaultValue="22"
          className="ml-[7px] h-1 w-[82px] appearance-none rounded-full bg-[linear-gradient(to_right,#b9b9b9_26%,#dedede_26%)] [&::-webkit-slider-thumb]:size-3 [&::-webkit-slider-thumb]:appearance-none [&::-webkit-slider-thumb]:rounded-full [&::-webkit-slider-thumb]:border-2 [&::-webkit-slider-thumb]:border-[#b9b9b9] [&::-webkit-slider-thumb]:bg-white"
        />
        <button type="button" aria-label="放大" className="ml-[7px]">
          <svg width="10" height="10" viewBox="0 0 10 10" stroke="#333" strokeWidth="2" aria-hidden="true"><path d="M5 0V10M0 5H10" /></svg>
        </button>
        <button type="button" className="ml-[19px] flex items-center gap-[11px] text-xs text-[#111]">95%<Caret className="text-[#666]" /></button>
        <button type="button" aria-label="全屏" className="ml-[17px]">
          <Svg size={16} strokeWidth="2"><path d="M1.500 6V1.500H6M12 1.500H16.500V6M16.500 12V16.500H12M6 16.500H1.500V12" /></Svg>
        </button>
        <button type="button" aria-label="适应宽度" className="ml-[8px]">
          <Svg size={17} strokeWidth="2"><rect x="1" y="1.500" width="16" height="15" /><path d="M4.500 9H13.500M7 6.500L4.500 9L7 11.500M11 6.500L13.500 9L11 11.500" strokeWidth="1.400" /></Svg>
        </button>
      </div>
    </footer>
  );
}

export default function App() {
  return (
    <div className="relative flex h-screen w-full -scale-x-100 flex-col overflow-hidden bg-[#0a78ec] font-['Noto_Sans','Noto_Sans_CJK_SC',sans-serif]">
      <TitleBar />
      <MenuBar />
      <Ribbon />
      <div className="flex min-h-0 flex-1 border-t border-[#cdcdcd]">
        <Library />
        <Workspace />
        <SideStrip />
      </div>
      <StatusBar />
      <svg width="150" height="245" viewBox="300 85 150 245" className="pointer-events-none absolute top-[85px] left-[300px] z-30" aria-hidden="true">
        <path d="M443 326.500L318.500 98.500L323 97L307 89.500V107L310.500 103.500L442 327.500Z" fill="#ff2412" />
      </svg>
    </div>
  );
}
